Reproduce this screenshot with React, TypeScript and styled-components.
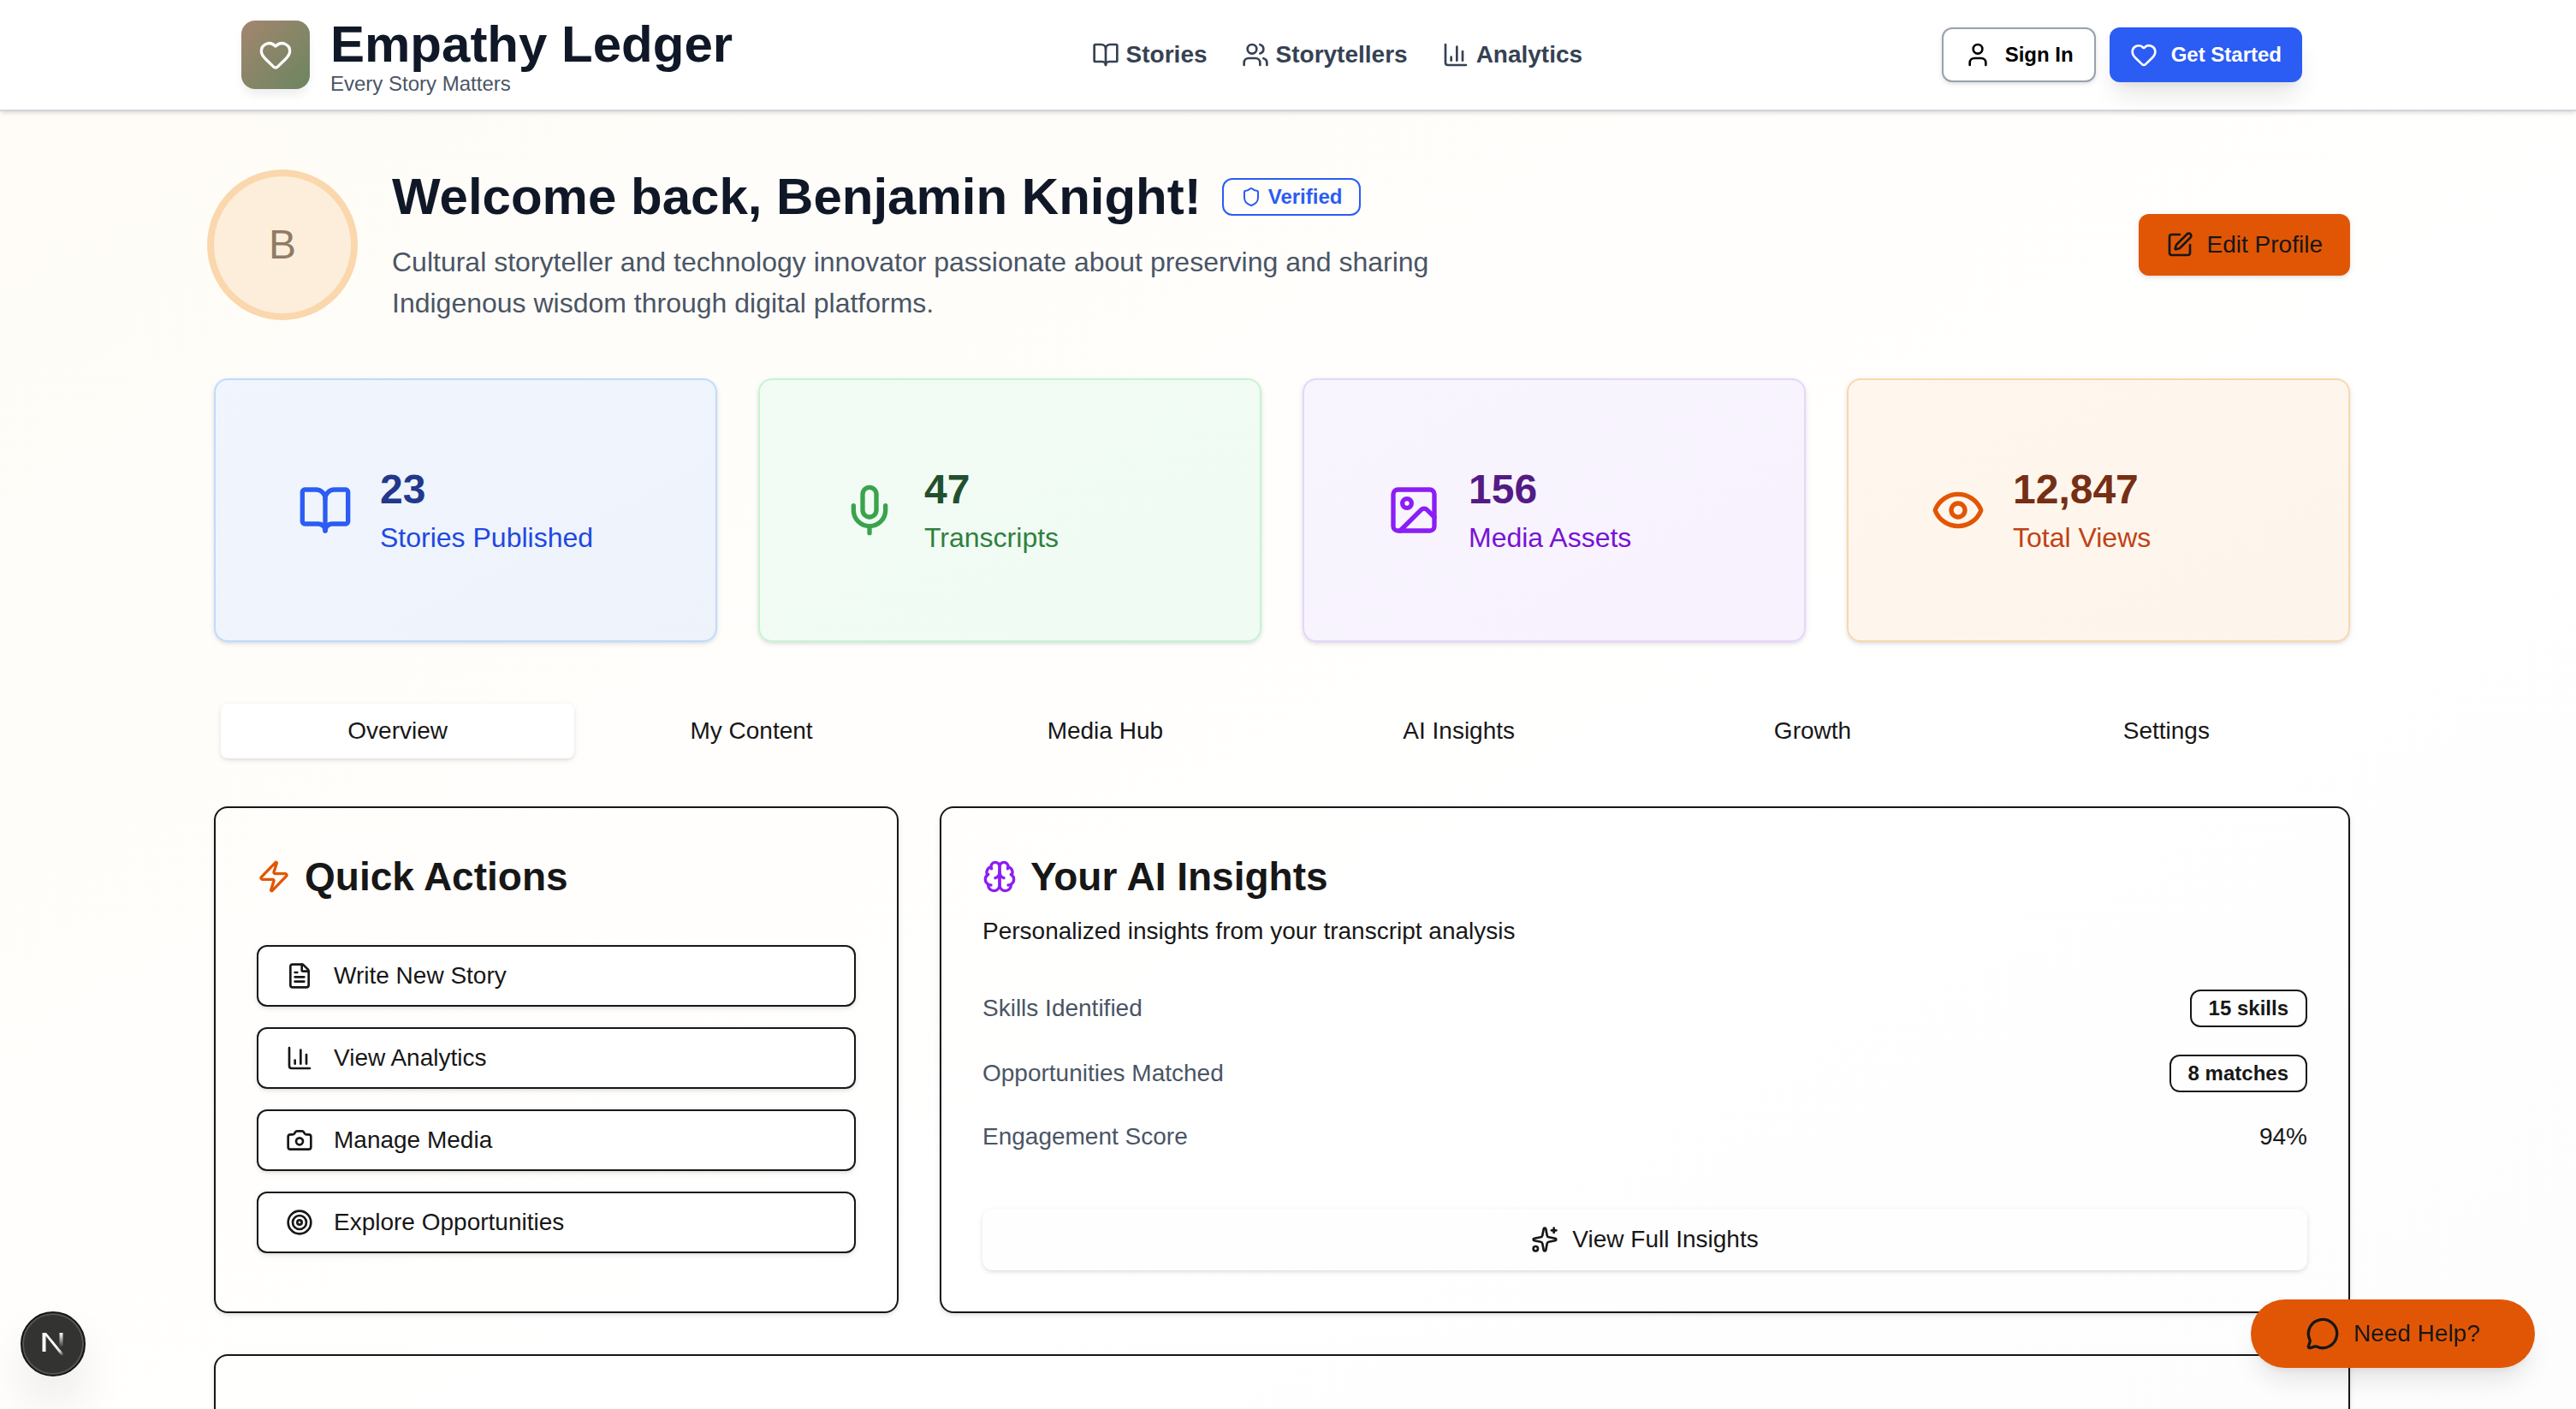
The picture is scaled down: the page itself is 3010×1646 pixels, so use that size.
import React from "react";
import styled, { createGlobalStyle } from "styled-components";
import {
  BookOpen,
  Camera,
  ChartColumn,
  Eye,
  FileText,
  Heart,
  Image as ImageIcon,
  MessageCircle,
  Mic,
  Shield,
  Sparkles,
  SquarePen,
  Target,
  User,
  Users,
  Zap,
} from "lucide-react";

const color = {
  ink: "#171717",
  heading: "#101828",
  muted: "#4a5565",
  nav: "#364153",
  blue: "#2b5cf3",
  orange: "#e15605",
  purple: "#8b1df5",
  peach: "#fad7ac",
};

const shadow = {
  small: "0 2px 6px rgba(0, 0, 0, 0.1), 0 2px 4px -2px rgba(0, 0, 0, 0.1)",
  large: "0 20px 30px -6px rgba(0, 0, 0, 0.1), 0 8px 12px -8px rgba(0, 0, 0, 0.1)",
};

const GlobalStyle = createGlobalStyle`
  *, *::before, *::after { box-sizing: border-box; }
  html { scrollbar-width: none; }
  body {
    margin: 0;
    background: #ffffff;
    color: ${color.ink};
    font-family: "Liberation Sans", Arial, Helvetica, sans-serif;
    font-size: 28px;
    line-height: 40px;
  }
  h1, h2, p, ul, dl, dd, dt { margin: 0; padding: 0; }
  ul { list-style: none; }
  button { font: inherit; color: inherit; cursor: pointer; }
  a { color: inherit; text-decoration: none; }
  svg { flex-shrink: 0; display: block; }
`;

const Page = styled.div`
  min-height: 100vh;
  background: linear-gradient(to bottom right, #fffcf6, #ffffff 60%, #fdfdfd);
`;

const Header = styled.header`
  position: relative;
  background: #ffffff;
  border-bottom: 2px solid #d1d5dc;
  box-shadow: ${shadow.small};
  padding-right: 14px;
`;

const HeaderInner = styled.div`
  max-width: 2560px;
  height: 128px;
  margin: 0 auto;
  padding: 0 88px 0 64px;
  display: flex;
  align-items: center;
  justify-content: space-between;
`;

const Brand = styled.a`
  display: flex;
  align-items: center;
  gap: 24px;
`;

const BrandMark = styled.span`
  width: 80px;
  height: 80px;
  border-radius: 16px;
  display: grid;
  place-items: center;
  color: #ffffff;
  background: linear-gradient(to bottom right, #a3866f, #6b8560);
  box-shadow: 0 8px 12px -2px rgba(0, 0, 0, 0.08);
`;

const BrandText = styled.span`
  display: flex;
  flex-direction: column;
  padding-top: 4px;
`;

const BrandName = styled.span`
  font-size: 60px;
  line-height: 64px;
  font-weight: 700;
  color: ${color.heading};
`;

const BrandTagline = styled.span`
  font-size: 24px;
  line-height: 28px;
  color: ${color.muted};
`;

const Nav = styled.nav`
  display: flex;
  gap: 40px;
`;

const NavLink = styled.a`
  display: flex;
  align-items: center;
  gap: 8px;
  font-weight: 700;
  color: ${color.nav};
`;

const HeaderActions = styled.div`
  display: flex;
  gap: 16px;
`;

const HeaderButton = styled.button<{ $primary?: boolean }>`
  height: 64px;
  padding: 0 24px;
  display: flex;
  align-items: center;
  gap: 16px;
  border: ${(p) => (p.$primary ? "0" : "2px solid #99a1af")};
  border-radius: 12px;
  font-size: 24px;
  line-height: 32px;
  font-weight: 700;
  color: ${(p) => (p.$primary ? "#ffffff" : "#000000")};
  background: ${(p) => (p.$primary ? color.blue : "#ffffff")};
  box-shadow: ${(p) => (p.$primary ? shadow.large : shadow.small)};
`;

const Main = styled.main`
  padding: 64px 14px 0 0;
`;

const Container = styled.div`
  max-width: 2560px;
  margin: 0 auto;
  padding: 0 32px;
  display: flex;
  flex-direction: column;
`;

const Welcome = styled.section`
  display: flex;
  align-items: center;
  justify-content: space-between;
`;

const Person = styled.div`
  display: flex;
  align-items: center;
  gap: 48px;
`;

const Avatar = styled.div`
  width: 160px;
  height: 160px;
  border-radius: 50%;
  display: grid;
  place-items: center;
  background: #fdeedb;
  box-shadow: 0 0 0 8px ${color.peach};
  color: #8f7b66;
  font-size: 48px;
  line-height: 64px;
`;

const PersonText = styled.div`
  display: flex;
  flex-direction: column;
  gap: 16px;
`;

const WelcomeRow = styled.div`
  display: flex;
  align-items: center;
  gap: 24px;
`;

const WelcomeTitle = styled.h1`
  font-size: 60px;
  line-height: 72px;
  font-weight: 700;
  color: ${color.heading};
`;

const Bio = styled.p`
  max-width: 1344px;
  font-size: 32px;
  line-height: 48px;
  color: ${color.muted};
`;

const Badge = styled.span<{ $tone?: string }>`
  height: 44px;
  padding: 0 20px;
  display: inline-flex;
  align-items: center;
  gap: 8px;
  border: 2px solid ${(p) => p.$tone ?? color.ink};
  border-radius: 12px;
  color: ${(p) => p.$tone ?? color.ink};
  font-size: 24px;
  line-height: 32px;
  font-weight: 700;
`;

const EditButton = styled.button`
  height: 72px;
  padding: 0 32px;
  display: flex;
  align-items: center;
  gap: 16px;
  border: 0;
  border-radius: 12px;
  background: ${color.orange};
  box-shadow: ${shadow.small};
`;

const Stats = styled.section`
  margin-top: 64px;
  display: grid;
  grid-template-columns: repeat(4, 1fr);
  gap: 48px;
`;

type Tone = {
  from: string;
  to: string;
  border: string;
  icon: string;
  value: string;
  label: string;
};

const StatCard = styled.article<{ $tone: Tone }>`
  padding: 96px;
  display: flex;
  align-items: center;
  gap: 32px;
  border: 2px solid ${(p) => p.$tone.border};
  border-radius: 16px;
  background: linear-gradient(to bottom right, ${(p) => p.$tone.from}, ${(p) => p.$tone.to});
  box-shadow: ${shadow.small};
  color: ${(p) => p.$tone.icon};
`;

const StatValue = styled.p<{ $tone: Tone }>`
  font-size: 48px;
  line-height: 64px;
  font-weight: 700;
  color: ${(p) => p.$tone.value};
`;

const StatLabel = styled.p<{ $tone: Tone }>`
  font-size: 32px;
  line-height: 48px;
  white-space: nowrap;
  color: ${(p) => p.$tone.label};
`;

const Tabs = styled.div`
  margin-top: 64px;
  padding: 8px;
  display: grid;
  grid-template-columns: repeat(6, 1fr);
`;

const Tab = styled.button<{ $active: boolean }>`
  height: 64px;
  padding: 0 24px;
  border: 0;
  border-radius: 8px;
  background: ${(p) => (p.$active ? "#ffffff" : "transparent")};
  box-shadow: ${(p) => (p.$active ? shadow.small : "none")};
`;

const Panels = styled.div`
  margin-top: 48px;
  display: grid;
  grid-template-columns: repeat(3, 1fr);
  gap: 48px;
`;

const Card = styled.section<{ $span?: number }>`
  grid-column: span ${(p) => p.$span ?? 1};
  padding: 48px;
  border: 2px solid ${color.ink};
  border-radius: 16px;
  box-shadow: ${shadow.small};
`;

const CardTitle = styled.h2<{ $icon?: string }>`
  display: flex;
  align-items: center;
  gap: 16px;
  font-size: 46px;
  line-height: 64px;
  font-weight: 700;

  svg {
    color: ${(p) => p.$icon ?? color.ink};
  }
`;

const CardSubtitle = styled.p`
  margin-top: 12px;
`;

const ActionList = styled.ul`
  margin-top: 48px;
  display: flex;
  flex-direction: column;
  gap: 24px;
`;

const ActionButton = styled.button`
  width: 100%;
  height: 72px;
  padding: 0 32px;
  display: flex;
  align-items: center;
  gap: 24px;
  border: 2px solid ${color.ink};
  border-radius: 12px;
  background: #ffffff;
  box-shadow: ${shadow.small};
`;

const InsightList = styled.dl`
  margin-top: 48px;
  display: flex;
  flex-direction: column;
  gap: 32px;
`;

const InsightRow = styled.div`
  display: flex;
  align-items: center;
  justify-content: space-between;

  dt {
    color: ${color.muted};
  }

  dd {
    display: flex;
  }
`;

const InsightsButton = styled.button`
  width: 100%;
  height: 72px;
  margin-top: 64px;
  display: flex;
  align-items: center;
  justify-content: center;
  gap: 16px;
  border: 0;
  border-radius: 12px;
  background: #fefefe;
  box-shadow: ${shadow.small};
`;

const HelpButton = styled.button`
  position: fixed;
  right: 48px;
  bottom: 48px;
  height: 80px;
  padding: 0 64px;
  display: flex;
  align-items: center;
  gap: 16px;
  border: 0;
  border-radius: 40px;
  background: ${color.orange};
  box-shadow: ${shadow.large};
`;

const DevBadge = styled.button`
  position: fixed;
  left: 24px;
  bottom: 38px;
  width: 76px;
  height: 76px;
  padding: 0;
  display: grid;
  place-items: center;
  border: 2px solid #171717;
  border-radius: 50%;
  background: #333331;
  box-shadow: inset 0 0 0 2px #555553, 0 32px 64px -16px rgba(0, 0, 0, 0.24);
`;

function Brain({ size }: { size: number }) {
  return (
    <svg
      width={size}
      height={size}
      viewBox="0 0 24 24"
      fill="none"
      stroke="currentColor"
      strokeWidth="2"
      strokeLinecap="round"
      strokeLinejoin="round"
      aria-hidden="true"
    >
      <path d="M12 5a3 3 0 1 0-5.997.125 4 4 0 0 0-2.526 5.77 4 4 0 0 0 .556 6.588A4 4 0 1 0 12 18Z" />
      <path d="M12 5a3 3 0 1 1 5.997.125 4 4 0 0 1 2.526 5.77 4 4 0 0 1-.556 6.588A4 4 0 1 1 12 18Z" />
      <path d="M15 13a4.5 4.5 0 0 1-3-4 4.5 4.5 0 0 1-3 4" />
      <path d="M17.599 6.5a3 3 0 0 0 .399-1.375" />
      <path d="M6.003 5.125A3 3 0 0 0 6.401 6.5" />
      <path d="M3.477 10.896a4 4 0 0 1 .585-.396" />
      <path d="M19.938 10.5a4 4 0 0 1 .585.396" />
      <path d="M6 18a4 4 0 0 1-1.967-.516" />
      <path d="M19.967 17.484A4 4 0 0 1 18 18" />
    </svg>
  );
}

function DevLogo() {
  return (
    <svg width="28" height="28" viewBox="0 0 28 28" fill="none" aria-hidden="true">
      <defs>
        <linearGradient id="dev-diagonal" x1="16" y1="16" x2="25" y2="28" gradientUnits="userSpaceOnUse">
          <stop stopColor="#ffffff" />
          <stop offset="0.6" stopColor="#ffffff" stopOpacity="0.8" />
          <stop offset="1" stopColor="#ffffff" stopOpacity="0" />
        </linearGradient>
        <linearGradient id="dev-stem" x1="24" y1="1" x2="24" y2="18" gradientUnits="userSpaceOnUse">
          <stop stopColor="#ffffff" />
          <stop offset="1" stopColor="#ffffff" stopOpacity="0" />
        </linearGradient>
      </defs>
      <path d="M3.5 23V1" stroke="#ffffff" strokeWidth="4" />
      <path d="M2 1H6L27 26.4L24.4 28.4L5 4Z" fill="url(#dev-diagonal)" />
      <path d="M23.5 1V18" stroke="url(#dev-stem)" strokeWidth="4" />
    </svg>
  );
}

const navItems = [
  { label: "Stories", Icon: BookOpen },
  { label: "Storytellers", Icon: Users },
  { label: "Analytics", Icon: ChartColumn },
];

const stats = [
  {
    value: "23",
    label: "Stories Published",
    Icon: BookOpen,
    tone: { from: "#f0f5fe", to: "#edf2fb", border: "#c0dafd", icon: color.blue, value: "#23388b", label: "#2148e0" },
  },
  {
    value: "47",
    label: "Transcripts",
    Icon: Mic,
    tone: { from: "#f2fcf4", to: "#f0fbf3", border: "#c4f5d0", icon: "#3aa34e", value: "#22502f", label: "#2f8040" },
  },
  {
    value: "156",
    label: "Media Assets",
    Icon: ImageIcon,
    tone: { from: "#f9f5ff", to: "#f7f2fd", border: "#e5d5fd", icon: color.purple, value: "#541b85", label: "#7812d3" },
  },
  {
    value: "12,847",
    label: "Total Views",
    Icon: Eye,
    tone: { from: "#fff7ed", to: "#fdf5eb", border: color.peach, icon: color.orange, value: "#752f15", label: "#c04216" },
  },
];

const tabs = ["Overview", "My Content", "Media Hub", "AI Insights", "Growth", "Settings"];

const actions = [
  { label: "Write New Story", Icon: FileText },
  { label: "View Analytics", Icon: ChartColumn },
  { label: "Manage Media", Icon: Camera },
  { label: "Explore Opportunities", Icon: Target },
];

export default function App() {
  const [activeTab, setActiveTab] = React.useState("Overview");

  return (
    <>
      <GlobalStyle />
      <Page>
        <Header>
          <HeaderInner>
            <Brand href="#home">
              <BrandMark>
                <Heart size={40} />
              </BrandMark>
              <BrandText>
                <BrandName>Empathy Ledger</BrandName>
                <BrandTagline>Every Story Matters</BrandTagline>
              </BrandText>
            </Brand>
            <Nav aria-label="Main">
              {navItems.map(({ label, Icon }) => (
                <NavLink key={label} href={`#${label.toLowerCase()}`}>
                  <Icon size={32} />
                  {label}
                </NavLink>
              ))}
            </Nav>
            <HeaderActions>
              <HeaderButton type="button">
                <User size={32} />
                Sign In
              </HeaderButton>
              <HeaderButton type="button" $primary>
                <Heart size={32} />
                Get Started
              </HeaderButton>
            </HeaderActions>
          </HeaderInner>
        </Header>

        <Main>
          <Container>
            <Welcome>
              <Person>
                <Avatar>B</Avatar>
                <PersonText>
                  <WelcomeRow>
                    <WelcomeTitle>Welcome back, Benjamin Knight!</WelcomeTitle>
                    <Badge $tone={color.blue}>
                      <Shield size={24} />
                      Verified
                    </Badge>
                  </WelcomeRow>
                  <Bio>
                    Cultural storyteller and technology innovator passionate about preserving and sharing Indigenous
                    wisdom through digital platforms.
                  </Bio>
                </PersonText>
              </Person>
              <EditButton type="button">
                <SquarePen size={32} />
                Edit Profile
              </EditButton>
            </Welcome>

            <Stats aria-label="Statistics">
              {stats.map(({ value, label, Icon, tone }) => (
                <StatCard key={label} $tone={tone}>
                  <Icon size={64} />
                  <div>
                    <StatValue $tone={tone}>{value}</StatValue>
                    <StatLabel $tone={tone}>{label}</StatLabel>
                  </div>
                </StatCard>
              ))}
            </Stats>

            <Tabs role="tablist">
              {tabs.map((label) => (
                <Tab
                  key={label}
                  type="button"
                  role="tab"
                  aria-selected={label === activeTab}
                  $active={label === activeTab}
                  onClick={() => setActiveTab(label)}
                >
                  {label}
                </Tab>
              ))}
            </Tabs>

            <Panels>
              <Card>
                <CardTitle $icon={color.orange}>
                  <Zap size={40} />
                  Quick Actions
                </CardTitle>
                <ActionList>
                  {actions.map(({ label, Icon }) => (
                    <li key={label}>
                      <ActionButton type="button">
                        <Icon size={32} />
                        {label}
                      </ActionButton>
                    </li>
                  ))}
                </ActionList>
              </Card>

              <Card $span={2}>
                <CardTitle $icon={color.purple}>
                  <Brain size={40} />
                  Your AI Insights
                </CardTitle>
                <CardSubtitle>Personalized insights from your transcript analysis</CardSubtitle>
                <InsightList>
                  <InsightRow>
                    <dt>Skills Identified</dt>
                    <dd>
                      <Badge>15 skills</Badge>
                    </dd>
                  </InsightRow>
                  <InsightRow>
                    <dt>Opportunities Matched</dt>
                    <dd>
                      <Badge>8 matches</Badge>
                    </dd>
                  </InsightRow>
                  <InsightRow>
                    <dt>Engagement Score</dt>
                    <dd>94%</dd>
                  </InsightRow>
                </InsightList>
                <InsightsButton type="button">
                  <Sparkles size={32} />
                  View Full Insights
                </InsightsButton>
              </Card>

              <Card $span={3}>
                <CardTitle>Recent Activity</CardTitle>
              </Card>
            </Panels>
          </Container>
        </Main>
      </Page>

      <DevBadge type="button" aria-label="Open developer tools">
        <DevLogo />
      </DevBadge>
      <HelpButton type="button">
        <MessageCircle size={40} />
        Need Help?
      </HelpButton>
    </>
  );
}
